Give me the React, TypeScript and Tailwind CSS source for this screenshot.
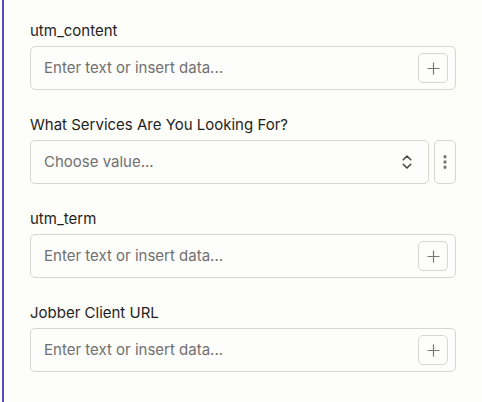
import { ChevronsUpDown, EllipsisVertical, Plus } from "lucide-react";

const font = { fontFamily: "Inter, 'Noto Sans', sans-serif" };

type TextFieldProps = {
  label: string;
};

const TextField = ({ label }: TextFieldProps) => {
  return (
    <div className="flex flex-col gap-[5px]">
      <div className="text-[15px] leading-5 text-[#1f1f1f]">{label}</div>
      <div className="h-[44px] flex items-center justify-between pl-[13px] pr-[7px] border border-[#d7d5cf] rounded-[5px] bg-[#fdfdfb]">
        <span className="text-[15px] text-[#707070]">Enter text or insert data...</span>
        <div className="w-[30px] h-[30px] flex items-center justify-center border border-[#d7d5cf] rounded-[5px]">
          <Plus size={19} strokeWidth={1.5} className="text-[#777]" />
        </div>
      </div>
    </div>
  );
};

const SelectField = ({ label }: TextFieldProps) => {
  return (
    <div className="flex flex-col gap-[5px]">
      <div className="text-[15px] leading-5 text-[#1f1f1f]">{label}</div>
      <div className="flex gap-[5px] h-[44px]">
        <div className="flex-1 flex items-center justify-between pl-[13px] pr-[12px] border border-[#d7d5cf] rounded-[5px] bg-[#fdfdfb]">
          <span className="text-[15px] text-[#707070]">Choose value...</span>
          <ChevronsUpDown size={18} strokeWidth={2} className="text-[#444]" />
        </div>
        <div className="w-[22px] flex items-center justify-center border border-[#d7d5cf] rounded-[5px]">
          <EllipsisVertical size={18} strokeWidth={2.4} className="text-[#777]" />
        </div>
      </div>
    </div>
  );
};

export default function App() {
  return (
    <div className="w-[482px] h-[402px] bg-[#fdfdfa] pl-[2px] overflow-hidden" style={font}>
      <div className="h-full border-l-2 border-[#5548c0] pl-[26px] pr-[26px] pt-[21px] flex flex-col gap-[25px]">
        <TextField label="utm_content" />
        <SelectField label="What Services Are You Looking For?" />
        <TextField label="utm_term" />
        <TextField label="Jobber Client URL" />
      </div>
    </div>
  );
}
